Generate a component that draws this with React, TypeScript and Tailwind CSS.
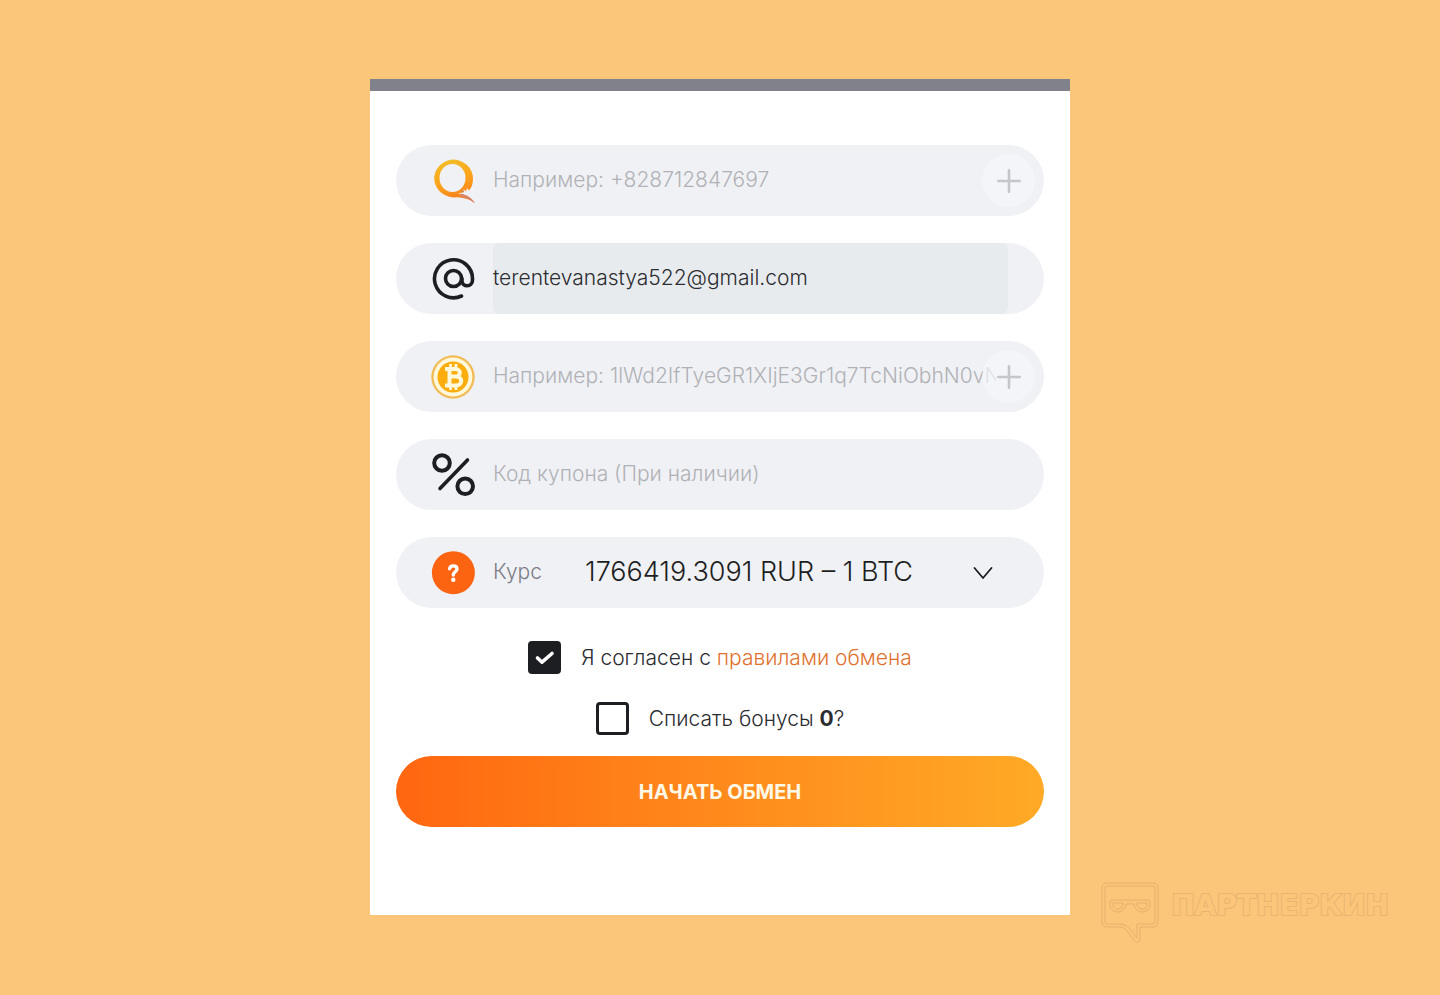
import { useState } from "react";
import type { ReactNode } from "react";

function QiwiIcon() {
  return (
    <svg viewBox="0 0 44 46" className="h-[46px] w-11" aria-hidden="true">
      <defs>
        <linearGradient id="qiwi-ring" x1="0.3" y1="0" x2="0.6" y2="1">
          <stop offset="0" stopColor="#f1bd26" />
          <stop offset="0.5" stopColor="#fca31a" />
          <stop offset="1" stopColor="#f47a20" />
        </linearGradient>
      </defs>
      <path
        d="M21.500 1.500A20.500 19 0 0 1 42 20.500C42 26 40.500 30 38 32.500L36 30L35 33.500L32.500 31L33 34L27 35.500C34 36.500 40 39 43.500 45C38 40.500 32 40 26 39.300A20.500 19 0 1 1 21.500 1.500ZM21.500 6A13 14 0 1 0 21.500 34A13 14 0 1 0 21.500 6Z"
        fill="url(#qiwi-ring)"
        fillRule="evenodd"
      />
      <path d="M30 35.500C36 37 41 40 44 45.500C39 41 35 39.500 29 39Z" fill="#d88468" />
      <circle cx="31.500" cy="33.500" r="1" fill="#b98a72" />
    </svg>
  );
}

function AtIcon() {
  return (
    <svg viewBox="0 0 44 44" className="size-11" fill="none" stroke="#1d1e21" strokeWidth="3.6" strokeLinecap="round" aria-hidden="true">
      <circle cx="22.500" cy="21.500" r="8" />
      <path d="M31 21.500V24C31 30.500 41.500 30.500 41.500 23V21.500A19 19 0 1 0 30.500 39" />
    </svg>
  );
}

function BitcoinIcon() {
  return (
    <svg viewBox="0 0 44 44" className="size-11" aria-hidden="true">
      <circle cx="22" cy="22" r="21.700" fill="#f2bb55" />
      <circle cx="22" cy="22" r="19.400" fill="#fff8da" />
      <circle cx="22" cy="22" r="15.500" fill="#fbad0d" />
      <g fill="none" stroke="#fff8da" strokeWidth="4" strokeLinejoin="round">
        <path d="M14 14H24C30.500 14 30.500 21.500 24 21.500H19H25C32 21.500 32 30.500 25 30.500H14M18.500 14V30" />
        <path d="M19.500 9V14M25 9V14M19.500 30V35M25 30V35" strokeWidth="2.800" />
      </g>
    </svg>
  );
}

function PercentIcon() {
  return (
    <svg viewBox="0 0 44 44" className="size-11" fill="none" stroke="#1d1e21" strokeWidth="4" strokeLinecap="round" aria-hidden="true">
      <circle cx="11" cy="10" r="7.800" />
      <circle cx="34.200" cy="33.300" r="7.800" />
      <path d="M36.500 7L9 35.500" strokeWidth="3.600" />
    </svg>
  );
}

function QuestionIcon() {
  return (
    <svg viewBox="0 0 44 44" className="size-11" aria-hidden="true">
      <circle cx="22.400" cy="21.700" r="21.500" fill="#fd6412" />
      <path d="M18.600 17.800C19.300 13.700 26 14 26 18C26 20.800 22.300 20.800 22.300 24" fill="none" stroke="#fff" strokeWidth="3.400" strokeLinecap="round" />
      <circle cx="22.300" cy="28.800" r="2.200" fill="#fff" />
    </svg>
  );
}

function Pill({ icon, children }: { icon: ReactNode; children: ReactNode }) {
  return (
    <div className="relative flex h-[71px] items-center overflow-hidden rounded-full bg-[#f0f1f5] pr-9 pl-[35px]">
      <span className="flex w-11 shrink-0 justify-center">{icon}</span>
      {children}
    </div>
  );
}

const fieldClass =
  "ml-[18px] h-full min-w-0 flex-1 bg-transparent pb-0.5 text-[21px] font-light outline-none placeholder:text-[#b0b1b6]";

function PlusButton({ label }: { label: string }) {
  return (
    <button type="button" aria-label={label} className="absolute top-[9px] right-[9px] flex size-[53px] items-center justify-center rounded-full bg-[#f5f6fa]/70">
      <svg viewBox="0 0 24 24" className="size-6" stroke="#c5c6ca" strokeWidth="2.600" strokeLinecap="round" aria-hidden="true">
        <path d="M12 1.300V22.700M1.300 12H22.700" />
      </svg>
    </button>
  );
}

function Tick({ checked, onChange, id }: { checked: boolean; onChange: (value: boolean) => void; id: string }) {
  return (
    <span className="relative flex size-[33px] shrink-0">
      <input
        id={id}
        type="checkbox"
        checked={checked}
        onChange={(e) => onChange(e.target.checked)}
        className="size-full appearance-none rounded-[4px] border-3 border-[#1d1e21] bg-white checked:bg-[#1d1e21]"
      />
      {checked && (
        <svg viewBox="0 0 33 33" className="pointer-events-none absolute inset-0" fill="none" stroke="#fff" strokeWidth="3.600" strokeLinecap="round" strokeLinejoin="round" aria-hidden="true">
          <path d="M9.500 17L14 21.200L24 12.500" />
        </svg>
      )}
    </span>
  );
}

function Watermark() {
  return (
    <div className="absolute right-[51px] bottom-[51px] flex gap-3" aria-hidden="true">
      <svg viewBox="0 0 58 62" className="h-[62px] w-[58px]" fill="none" stroke="#e5b26d" strokeWidth="1">
        <path d="M6 1H52Q57 1 57 6V40Q57 45 52 45H39V57C39 61 36 61 34 59C28 53 26 46 20 45H6Q1 45 1 40V6Q1 1 6 1Z" />
        <path d="M6 4H52Q54 4 54 6V40Q54 42 52 42H36V56C31 50 28 43 20 42H6Q4 42 4 40V6Q4 4 6 4Z" />
        <path d="M11 18H47Q49 18 49 20V23C49 32 34 33 33 22H25C24 33 9 32 9 23V20Q9 18 11 18Z" />
        <path d="M12 21H22C22 29 12 29 12 23ZM36 21H46V23C46 29 36 29 36 21Z" />
      </svg>
      <span className="pt-2 font-['DejaVu_Sans',sans-serif] text-[28px] leading-8 font-bold text-[#fbc57a] [paint-order:stroke_fill] [-webkit-text-stroke:2px_#e9b671]">
        ПАРТНЕРКИН
      </span>
    </div>
  );
}

export default function App() {
  const [agreed, setAgreed] = useState(true);
  const [bonus, setBonus] = useState(false);

  return (
    <main className="relative flex min-h-screen items-center justify-center bg-[#fbc57a] pb-px font-['Inter','Liberation_Sans',sans-serif] text-[#2c2d31]">
      <form
        className="w-full max-w-[700px] border-t-12 border-[#80818a] bg-white px-[26px] pt-[54px] pb-[88px]"
        onSubmit={(e) => e.preventDefault()}
      >
        <div className="flex flex-col gap-[27px]">
          <Pill icon={<QiwiIcon />}>
            <input aria-label="Номер кошелька" type="tel" placeholder="Например: +828712847697" className={fieldClass} />
            <PlusButton label="Добавить кошелёк" />
          </Pill>
          <Pill icon={<AtIcon />}>
            <input
              aria-label="E-mail"
              type="email"
              defaultValue="terentevanastya522@gmail.com"
              className="ml-[18px] h-full min-w-0 flex-1 rounded-md bg-[#e8ebee] pb-0.5 text-[21px] font-light outline-none"
            />
          </Pill>
          <Pill icon={<BitcoinIcon />}>
            <input
              aria-label="Адрес Bitcoin"
              type="text"
              placeholder="Например: 1lWd2IfTyeGR1XIjE3Gr1q7TcNiObhN0vN"
              className="mr-3 ml-[18px] h-full min-w-0 flex-1 bg-transparent pb-0.5 text-[21px] font-light outline-none placeholder:text-[#b0b1b6]"
            />
            <PlusButton label="Добавить адрес" />
          </Pill>
          <Pill icon={<PercentIcon />}>
            <input aria-label="Код купона" type="text" placeholder="Код купона (При наличии)" className={fieldClass} />
          </Pill>
          <Pill icon={<QuestionIcon />}>
            <label htmlFor="rate" className="ml-[18px] w-[92px] shrink-0 pb-0.5 text-[21px] font-light text-[#7c7d86]">
              Курс
            </label>
            <select id="rate" className="h-full min-w-0 flex-1 appearance-none bg-transparent text-[27px] font-light text-[#1d1e21] outline-none">
              <option>1766419.3091 RUR – 1 BTC</option>
            </select>
            <svg viewBox="0 0 20 14" className="pointer-events-none absolute right-[51px] h-3.5 w-5" fill="none" stroke="#1d1e21" strokeWidth="1.800" strokeLinecap="round" strokeLinejoin="round" aria-hidden="true">
              <path d="M1.500 2L10 12L18.500 2" />
            </svg>
          </Pill>
        </div>

        <div className="mt-[33px] flex flex-col items-center gap-7 text-[21px] leading-8 font-light">
          <div className="flex items-center gap-5">
            <Tick id="agree" checked={agreed} onChange={setAgreed} />
            <span>
              <label htmlFor="agree">Я согласен с </label>
              <a href="#rules" className="text-[#e0722e]">правилами обмена</a>
            </span>
          </div>
          <div className="flex items-center gap-5">
            <Tick id="bonus" checked={bonus} onChange={setBonus} />
            <label htmlFor="bonus">
              Списать бонусы <b className="font-bold">0</b>?
            </label>
          </div>
        </div>

        <button
          type="submit"
          className="mt-[21px] h-[71px] w-full rounded-full bg-linear-to-r from-[#ff6610] to-[#ffaa26] text-[20px] font-bold text-[#fff8e6]"
        >
          НАЧАТЬ ОБМЕН
        </button>
      </form>
      <Watermark />
    </main>
  );
}
